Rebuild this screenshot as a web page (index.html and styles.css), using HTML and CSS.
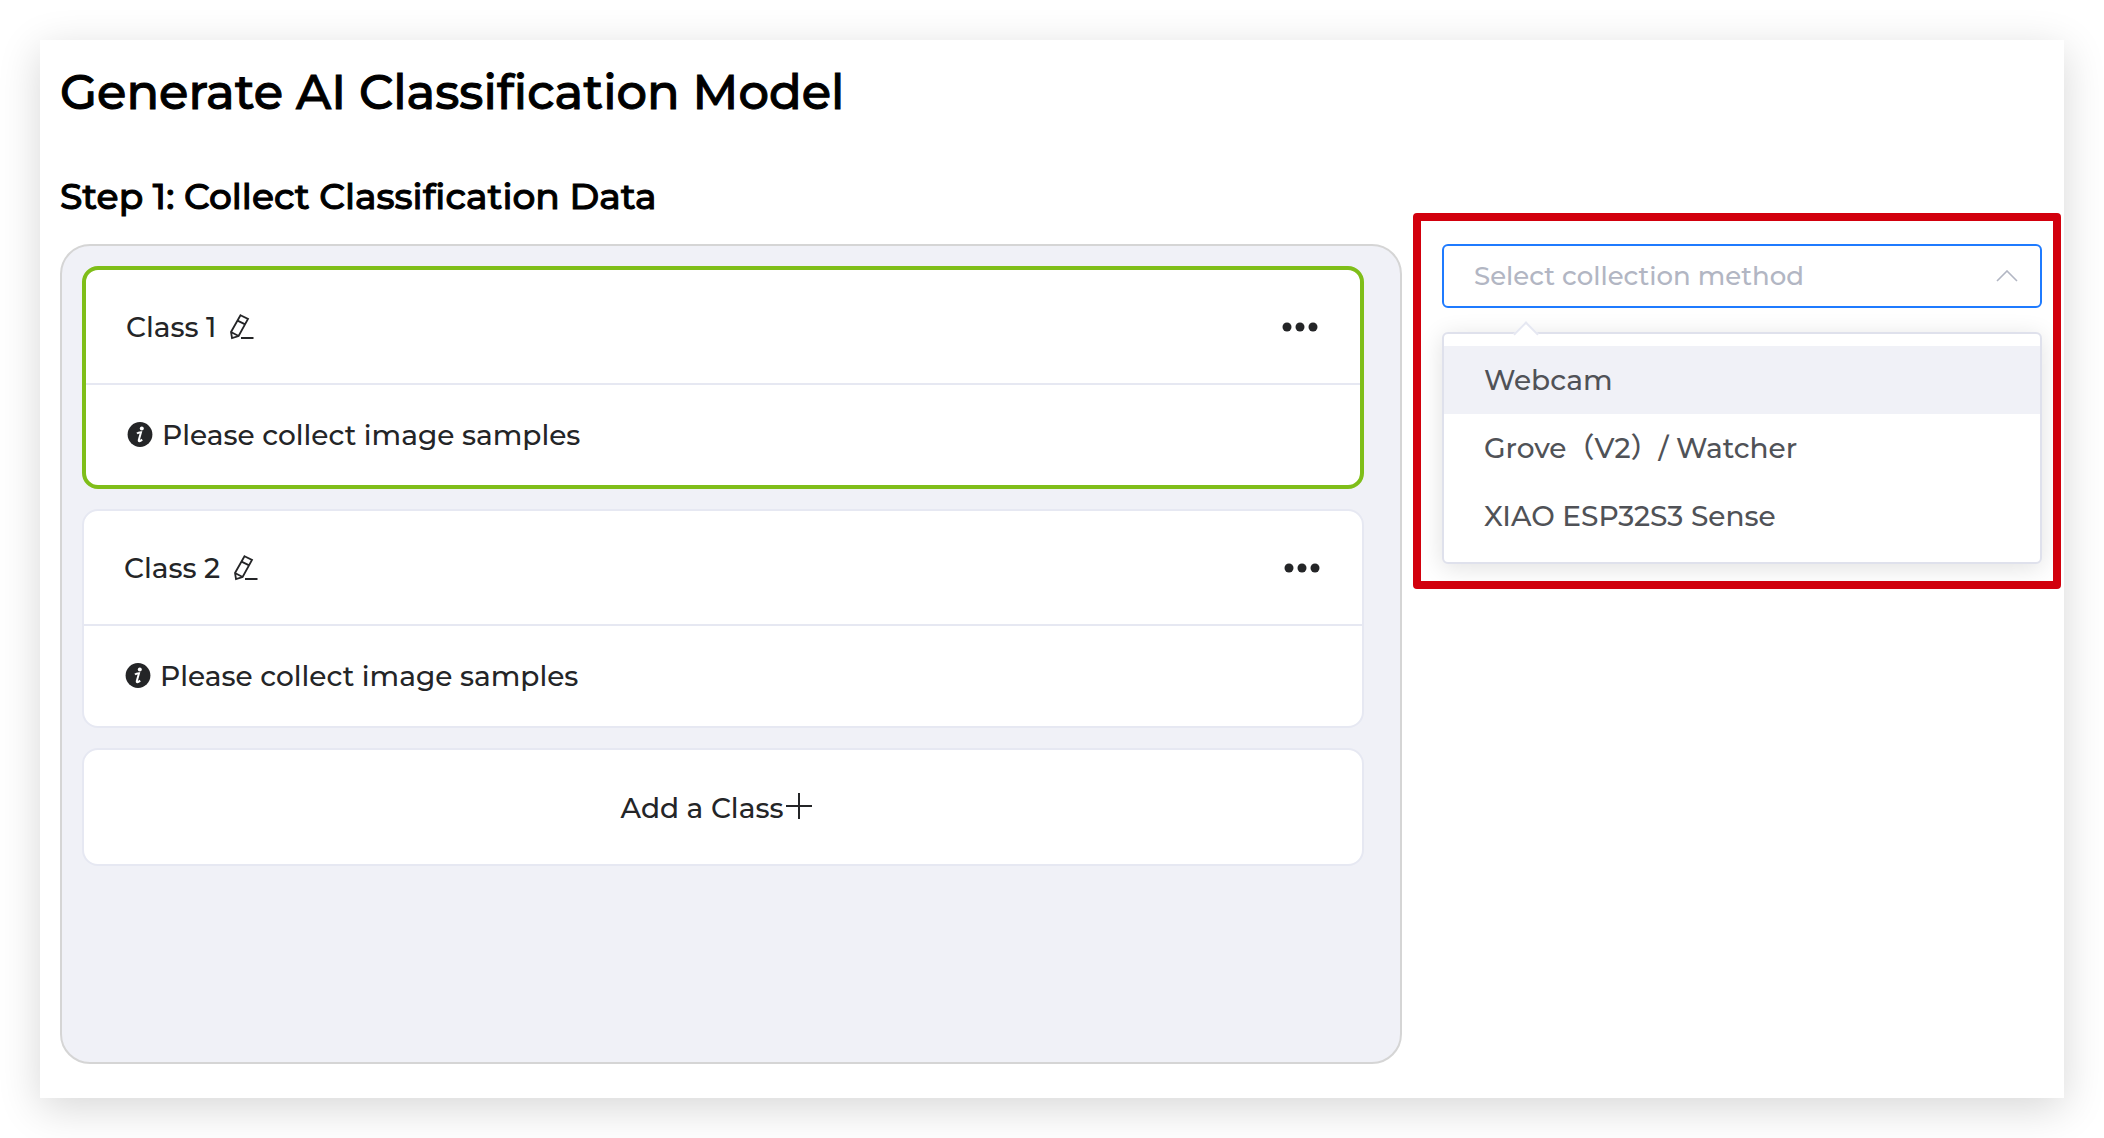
FILE: index.html
```html
<!DOCTYPE html>
<html lang="en">
<head>
    <meta charset="UTF-8">
    <meta name="viewport" content="width=device-width, initial-scale=1.0">
    <title>Generate AI Classification Model</title>
    <link rel="stylesheet" href="styles.css">
</head>
<body>
    <main class="window">
        <h1>Generate AI Classification Model</h1>

        <div class="layout">
            <section class="collect">
                <h2>Step 1: Collect Classification Data</h2>

                <div class="panel">
                    <article class="card card-active">
                        <div class="card-header">
                            <span>Class 1</span>
                            <button type="button" class="icon-button" aria-label="Rename Class 1">
                                <svg class="icon-edit" viewBox="0 0 24 26"><path d="M10.5 1.2L18 5L8.6 22L2 24L1 18ZM7.5 6.6L15.2 10.4M1 18L8.6 22M11 24H23.5"/></svg>
                            </button>
                            <button type="button" class="icon-button more" aria-label="Class 1 options">
                                <svg class="icon-more" viewBox="0 0 40 10"><circle cx="7" cy="5" r="4.5"/><circle cx="20" cy="5" r="4.5"/><circle cx="33" cy="5" r="4.5"/></svg>
                            </button>
                        </div>
                        <p class="card-body">
                            <svg class="icon-info" viewBox="0 0 26 26"><circle cx="14" cy="12.5" r="12.4"/><circle class="dot" cx="15.8" cy="6.4" r="2"/><path d="M11 11.6Q12.5 10.2 15 10.2L12.8 18Q12.4 20.6 16.2 17.6"/></svg>
                            Please collect image samples
                        </p>
                    </article>

                    <article class="card">
                        <div class="card-header">
                            <span>Class 2</span>
                            <button type="button" class="icon-button" aria-label="Rename Class 2">
                                <svg class="icon-edit" viewBox="0 0 24 26"><path d="M10.5 1.2L18 5L8.6 22L2 24L1 18ZM7.5 6.6L15.2 10.4M1 18L8.6 22M11 24H23.5"/></svg>
                            </button>
                            <button type="button" class="icon-button more" aria-label="Class 2 options">
                                <svg class="icon-more" viewBox="0 0 40 10"><circle cx="7" cy="5" r="4.5"/><circle cx="20" cy="5" r="4.5"/><circle cx="33" cy="5" r="4.5"/></svg>
                            </button>
                        </div>
                        <p class="card-body">
                            <svg class="icon-info" viewBox="0 0 26 26"><circle cx="14" cy="12.5" r="12.4"/><circle class="dot" cx="15.8" cy="6.4" r="2"/><path d="M11 11.6Q12.5 10.2 15 10.2L12.8 18Q12.4 20.6 16.2 17.6"/></svg>
                            Please collect image samples
                        </p>
                    </article>

                    <button type="button" class="card add-class">
                        Add a Class
                        <svg class="icon-plus" viewBox="0 0 32 32"><path d="M3 14H29M16 1V27"/></svg>
                    </button>
                </div>
            </section>

            <aside class="method">
                <div class="select-box">
                    <select class="select" aria-label="Collection method">
                        <option value="" selected>Select collection method</option>
                        <option>Webcam</option>
                        <option>Grove（V2）/ Watcher</option>
                        <option>XIAO ESP32S3 Sense</option>
                    </select>
                    <svg class="icon-arrow" viewBox="0 0 22 12"><path d="M1 11L11 1L21 11"/></svg>
                </div>
                <div class="menu">
                    <button type="button" class="menu-item hover">Webcam</button>
                    <button type="button" class="menu-item">Grove（V2）/ Watcher</button>
                    <button type="button" class="menu-item">XIAO ESP32S3 Sense</button>
                </div>
            </aside>
        </div>
    </main>
</body>
</html>
```

FILE: styles.css
```css
* {
    box-sizing: border-box;
}
html {
    background: #fff;
}
body {
    margin: 0;
    padding: 40px;
    color: #242527;
    font-family: Montserrat, Inter, "Noto Sans CJK SC", sans-serif;
    font-size: 28px;
    font-weight: 500;
    line-height: 40px;
}
button, select {
    font: inherit;
    color: inherit;
    cursor: pointer;
}
.window {
    padding: 20px 3px 34px 20px;
    background: #fff;
    box-shadow: 0 10px 40px rgba(0, 0, 0, 0.16);
}
h1, h2 {
    margin: 0;
    color: #000;
    font-weight: 500;
    font-variant-ligatures: none;
    -webkit-text-stroke: 1px #000;
}
h1 {
    font-size: 48px;
    line-height: 64px;
}
h2 {
    margin-bottom: 24px;
    font-size: 36px;
    line-height: 48px;
}
.layout {
    display: grid;
    grid-template-columns: minmax(0, 1fr) 648px;
    column-gap: 11px;
    align-items: start;
    margin-top: 48px;
}

/* class list */
.panel {
    display: flex;
    flex-direction: column;
    gap: 20px;
    min-height: 820px;
    padding: 20px 36px 20px 20px;
    border: 2px solid #d5d5d5;
    border-radius: 30px;
    background: #f0f1f7;
}
.card {
    border: 2px solid #e6e8f2;
    border-radius: 16px;
    background: #fff;
}
.card-active {
    border: 4px solid #7fbe19;
}
.card-header {
    display: flex;
    align-items: center;
    gap: 14px;
    height: 115px;
    padding: 0 40px;
    border-bottom: 2px solid #e6e8f2;
}
.card-body {
    display: flex;
    align-items: center;
    gap: 10px;
    height: 100px;
    margin: 0;
    padding: 0 40px;
}
.icon-button {
    display: flex;
    padding: 0;
    border: 0;
    background: none;
}
.more {
    margin-left: auto;
}
.add-class {
    display: flex;
    align-items: center;
    justify-content: center;
    height: 118px;
    padding: 2px 10px 0 0;
}

/* collection method */
.method {
    margin-top: 41px;
    padding: 23px 11px 17px 21px;
    border: 8px solid #d2000d;
    border-radius: 4px;
}
.select-box {
    position: relative;
}
.select {
    display: block;
    width: 100%;
    height: 64px;
    padding: 0 60px 0 30px;
    border: 2px solid #1f7bff;
    border-radius: 6px;
    outline: none;
    background: #fff;
    color: #b2b6c3;
    font-size: 26px;
    appearance: none;
}
.menu {
    position: relative;
    margin-top: 24px;
    padding: 12px 0;
    border: 2px solid #dfe1ec;
    border-radius: 6px;
    background: #fff;
    box-shadow: 0 4px 24px rgba(0, 0, 0, 0.12);
}
.menu::before {
    content: "";
    position: absolute;
    top: -9px;
    left: 73px;
    width: 16px;
    height: 16px;
    border: 2px solid #e6e8f2;
    border-right: 0;
    border-bottom: 0;
    background: #fff;
    transform: rotate(45deg);
}
.menu-item {
    position: relative;
    display: block;
    width: 100%;
    height: 68px;
    padding: 0 40px;
    border: 0;
    background: #fff;
    color: #505257;
    text-align: left;
}
.menu-item.hover {
    background: #f0f1f7;
}

/* icons */
.icon-edit {
    width: 24px;
    height: 26px;
    fill: none;
    stroke: #242527;
    stroke-width: 1.8;
}
.icon-more {
    width: 40px;
    height: 10px;
    fill: #242527;
}
.icon-info {
    width: 26px;
    height: 26px;
    overflow: visible;
    fill: #242527;
}
.icon-info .dot {
    fill: #fff;
}
.icon-info path {
    fill: none;
    stroke: #fff;
    stroke-width: 2;
}
.icon-plus {
    width: 32px;
    height: 32px;
    fill: none;
    stroke: #242527;
    stroke-width: 2;
}
.icon-arrow {
    position: absolute;
    top: 26px;
    right: 24px;
    width: 22px;
    height: 12px;
    fill: none;
    stroke: #b2b6c3;
    stroke-width: 1.6;
    pointer-events: none;
}
```
